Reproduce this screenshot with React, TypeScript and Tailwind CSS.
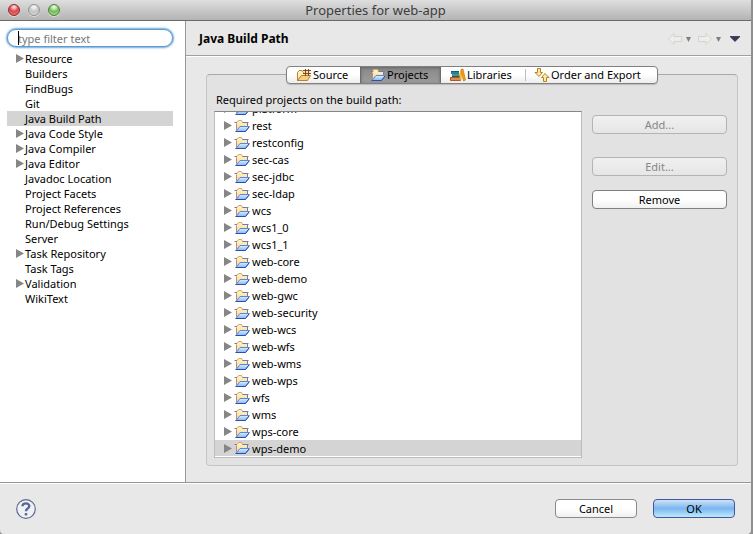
import React from "react";

const pages = [
  { name: "Resource", branch: true },
  { name: "Builders" },
  { name: "FindBugs" },
  { name: "Git" },
  { name: "Java Build Path", selected: true },
  { name: "Java Code Style", branch: true },
  { name: "Java Compiler", branch: true },
  { name: "Java Editor", branch: true },
  { name: "Javadoc Location" },
  { name: "Project Facets" },
  { name: "Project References" },
  { name: "Run/Debug Settings" },
  { name: "Server" },
  { name: "Task Repository", branch: true },
  { name: "Task Tags" },
  { name: "Validation", branch: true },
  { name: "WikiText" },
];

const projects = [
  "platform", "rest", "restconfig", "sec-cas", "sec-jdbc", "sec-ldap", "wcs",
  "wcs1_0", "wcs1_1", "web-core", "web-demo", "web-gwc", "web-security",
  "web-wcs", "web-wfs", "web-wms", "web-wps", "wfs", "wms", "wps-core", "wps-demo",
];

function Triangle() {
  return (
    <svg width="8" height="9" viewBox="0 0 8 9" className="shrink-0" aria-hidden="true">
      <path d="M0 0L8 4.5L0 9Z" fill="#868686" />
    </svg>
  );
}

function ProjectFolder() {
  return (
    <svg width="16" height="14" viewBox="0 0 16 14" className="shrink-0" aria-hidden="true">
      <defs>
        <linearGradient id="front" x1="0" y1="0" x2="0" y2="1">
          <stop offset="0" stopColor="#d9f1ff" />
          <stop offset="1" stopColor="#86b6f2" />
        </linearGradient>
        <linearGradient id="back" x1="0" y1="0" x2="0" y2="1">
          <stop offset="0" stopColor="#fff6cf" />
          <stop offset="1" stopColor="#f7d488" />
        </linearGradient>
      </defs>
      <path d="M2 12V3.5L3.5 1.5H7.5L9 3.5H13V8H6L2 12Z" fill="url(#back)" />
      <path d="M3 3.5L4.5 1.5H7.5L8.5 3.5H12.5" fill="none" stroke="#d3a860" />
      <path d="M2.5 4.5V11" stroke="#c08a78" fill="none" />
      <path d="M0.5 3.5H3M8.5 3.5H14.5M13.5 4V7" stroke="#7d78a0" fill="none" />
      <path d="M2 12.5L6 7.5H15.5L11.5 12.5Z" fill="url(#front)" stroke="#5f86d6" strokeLinejoin="round" />
      <path d="M1.5 12.5H11.5L15 8" fill="none" stroke="#2c4db4" />
    </svg>
  );
}

function SourceFolder() {
  return (
    <svg width="16" height="14" viewBox="0 0 16 14" className="shrink-0" aria-hidden="true">
      <path d="M1.5 12.5V4.5L3 2.5H6L7.5 4.5H13.5V7.5H5.5L2 12.5Z" fill="#fdeebb" stroke="#b8812f" />
      <path d="M1.5 12.5L5.5 7.5H14.5L11.5 12.5Z" fill="#f6cf7c" stroke="#b8812f" strokeLinejoin="round" />
      <path d="M8 2H14V7H8Z" fill="#f6deb0" />
      <path d="M9.5 1V8M12.5 1V8M7 2.5H15M7 5.5H15" stroke="#7c4a1c" fill="none" />
    </svg>
  );
}

function Books() {
  return (
    <svg width="16" height="14" viewBox="0 0 16 14" className="shrink-0" aria-hidden="true">
      <path d="M1 3H9V6H1Z" fill="#2b7cae" />
      <path d="M1 3H9V4H1Z" fill="#175a86" />
      <path d="M2 6H10V9H2Z" fill="#37a27a" />
      <path d="M2 8H10V9H2Z" fill="#176a50" />
      <path d="M0.5 9.5H10.5V12.5H0.5Z" fill="#e58a56" stroke="#b3532a" />
      <path d="M9 7L11 1H12.5L11.5 12H10.5Z" fill="#f5b63a" />
      <path d="M11 1.5L13 1L15.5 12L13.5 13Z" fill="#f0a01e" stroke="#c77a0c" strokeWidth=".7" />
    </svg>
  );
}

function OrderArrows() {
  return (
    <svg width="16" height="14" viewBox="0 0 16 14" className="shrink-0" aria-hidden="true">
      <g fill="#fdeaa8" stroke="#b9801f" strokeLinejoin="round">
        <path d="M3.5 0.5H6.5V4.5H8.5L5 8.5L1 4.5H3.5Z" />
        <path d="M9.5 13.5H12.5V9.5H15L11 5.5L7.5 9.5H9.5Z" />
      </g>
    </svg>
  );
}

function HistoryArrow({ flip }: { flip?: boolean }) {
  return (
    <svg width="14" height="12" viewBox="0 0 14 12" className={flip ? "-scale-x-100" : ""} aria-hidden="true">
      <path d="M0.5 6L6 0.5V3.5H13.5V8.5H6V11.5Z" fill="#ededea" stroke="#d3d3ce" strokeLinejoin="round" />
    </svg>
  );
}

function Caret() {
  return (
    <svg width="5" height="5" viewBox="0 0 5 5" aria-hidden="true">
      <path d="M0 0H5L2.5 5Z" fill="#7e7e7e" />
    </svg>
  );
}

const light = "size-3 rounded-full border shadow-[0_1px_0_rgba(255,255,255,0.5)]";
const push = "h-[19px] rounded-[4px] border text-center leading-4";
const tab = "flex items-center gap-px pb-px";

export default function App() {
  return (
    <div className="flex h-screen bg-[#8f8f8f] pr-0.5 font-['Noto_Sans',sans-serif] text-[11px] leading-[15px] text-black">
      <div className="flex min-w-0 flex-1 flex-col rounded-b-[4px] bg-[#e8e8e8]">
        <header className="grid h-[21px] shrink-0 grid-cols-[1fr_auto_1fr] items-center border-b border-[#6a6a6a] bg-linear-to-b from-[#dedede] to-[#b4b4b4] px-2">
          <div className="flex gap-2">
            <button aria-label="Close" className={`${light} border-[#8c2c2c] bg-[radial-gradient(circle_at_50%_20%,#fbd0d0_10%,#e0484a_45%,#f0797a)]`} />
            <button aria-label="Minimize" className={`${light} border-[#929292] bg-[radial-gradient(circle_at_50%_20%,#f2f2f2_10%,#c4c4c4_50%,#dcdcdc)]`} />
            <button aria-label="Zoom" className={`${light} border-[#4f7f3c] bg-[radial-gradient(circle_at_50%_20%,#e2f6d6_10%,#76bb5a_50%,#b0e890)]`} />
          </div>
          <h1 className="text-[13px] leading-4 text-[#3c3c3c]">Properties for web-app</h1>
        </header>

        <div className="flex min-h-0 flex-1">
          <aside className="w-[186px] shrink-0 border-r border-[#989898] bg-white pt-2 pr-3 pl-[7px]">
            <div className="relative">
              <input
                type="text"
                aria-label="Filter pages"
                placeholder="type filter text"
                className="block h-[18px] w-full rounded-full border border-[#5c9bd0] bg-white px-2.5 shadow-[0_0_2px_1px_#6ba8dc] outline-none placeholder:text-[#777777]"
              />
              <span className="absolute top-0.5 left-[11px] h-3.5 w-px bg-black" />
            </div>
            <ul className="mt-1">
              {pages.map((p) => (
                <li key={p.name} className={`flex h-[15px] items-center pl-[9px] ${p.selected ? "bg-[#d4d4d4]" : ""}`}>
                  <span className="w-[9px]">{p.branch && <Triangle />}</span>
                  {p.name}
                </li>
              ))}
            </ul>
          </aside>

          <main className="flex min-w-0 flex-1 flex-col">
            <div className="flex h-[35px] shrink-0 items-center justify-between border-b border-[#a0a0a0] pr-[11px] pl-[13px] shadow-[0_1px_0_white]">
              <h2 className="text-[12px] font-bold">Java Build Path</h2>
              <div className="flex items-center gap-1 pt-0.5">
                <button aria-label="Back"><HistoryArrow /></button>
                <button aria-label="Back history" className="mr-[3px]"><Caret /></button>
                <button aria-label="Forward"><HistoryArrow flip /></button>
                <button aria-label="Forward history" className="mr-[5px]"><Caret /></button>
                <button aria-label="Menu">
                  <svg width="10" height="6" viewBox="0 0 10 6" aria-hidden="true">
                    <path d="M0 0.5H10L5 5.5Z" fill="#3b3560" stroke="#151522" strokeWidth=".6" />
                  </svg>
                </button>
              </div>
            </div>

            <section className="mt-[18px] mr-[13px] mb-4 ml-5 flex min-h-0 flex-1 flex-col rounded-[4px] border border-[#c4c4c4] border-t-[#a9a9a9] bg-[#e2e2e2] px-[7px] pb-[7px]">
              <div role="tablist" className="-mt-[9px] flex h-[18px] shrink-0 self-center overflow-hidden rounded-[4px] border border-[#808080] bg-linear-to-b from-white from-50% to-[#ededed] shadow-[0_1px_1px_#bbbbbb]">
                <button role="tab" className={`${tab} w-[73px] pl-[9px]`}><SourceFolder />Source</button>
                <button role="tab" aria-selected="true" className={`${tab} w-[81px] border-x border-[#6c6c6c] bg-linear-to-b from-[#888888] to-[#9c9c9c] pl-[9px] shadow-[inset_0_1px_3px_#666666]`}><ProjectFolder />Projects</button>
                <button role="tab" className={`${tab} w-[84px] pl-[9px]`}><Books />Libraries</button>
                <span className="my-0.5 w-px bg-[#bdbdbd]" />
                <button role="tab" className={`${tab} w-[131px] pl-2`}><OrderArrows />Order and Export</button>
              </div>

              <h3 className="mt-2 mb-1 ml-0.5">Required projects on the build path:</h3>
              <div className="flex min-h-0 flex-1 gap-2.5">
                <ul className="flex min-w-0 flex-1 flex-col justify-end overflow-hidden border border-[#bcbcbc] border-t-[#858585] bg-white">
                  {projects.map((name) => (
                    <li key={name} className={`flex h-[17px] shrink-0 items-center pl-[9px] ${name === "wps-demo" ? "border-b border-white bg-[#d4d4d4]" : ""}`}>
                      <span className="w-2.5"><Triangle /></span>
                      <ProjectFolder />
                      <span className="ml-0.5">{name}</span>
                    </li>
                  ))}
                </ul>
                <div className="mr-[3px] flex w-[135px] shrink-0 flex-col pt-1">
                  <button disabled className={`${push} border-[#b4b4b4] bg-linear-to-b from-[#f0f0f0] to-[#e6e6e6] text-[#868686]`}>Add...</button>
                  <button disabled className={`${push} mt-[23px] border-[#b4b4b4] bg-linear-to-b from-[#f0f0f0] to-[#e6e6e6] text-[#868686]`}>Edit...</button>
                  <button className={`${push} mt-3.5 border-[#808080] bg-linear-to-b from-white from-50% to-[#f0f0f0]`}>Remove</button>
                </div>
              </div>
            </section>
          </main>
        </div>

        <footer className="flex h-[52px] shrink-0 items-center border-t border-[#969696] px-4 shadow-[inset_0_1px_0_white]">
          <button aria-label="Help" className="mr-auto">
            <svg width="20" height="20" viewBox="0 0 20 20" aria-hidden="true">
              <circle cx="10" cy="10" r="9.3" fill="#f0f1f4" stroke="#5a6c90" strokeWidth="1.2" />
              <path d="M6.5 7.2C6.5 3.4 13.4 3.5 13.3 7.2C13.2 9.4 10 9.4 10 12.2" fill="none" stroke="#546a94" strokeWidth="2.4" />
              <rect x="8.6" y="14" width="2.8" height="2.6" rx="1" fill="#546a94" />
            </svg>
          </button>
          <button className={`${push} mr-4 w-[82px] border-[#8a8a8a] bg-linear-to-b from-white from-50% to-[#f0f0f0]`}>Cancel</button>
          <button className={`${push} w-[82px] border-[#47569c] bg-linear-to-b from-[#cde2f8] via-[#7ab6ef] via-50% to-[#bdecfd]`}>OK</button>
        </footer>
      </div>
    </div>
  );
}
